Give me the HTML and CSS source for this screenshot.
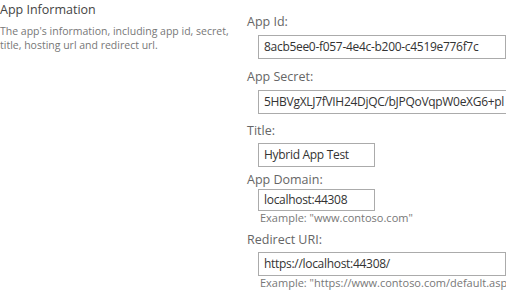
FILE: index.html
```html
<!DOCTYPE html>
<html>
<head>
<meta charset="utf-8">
<link rel="stylesheet" href="styles.css">
</head>
<body>
<div class="section">
  <div class="info">
    <h3 class="info-title">App Information</h3>
    <p class="info-desc">The app's information, including app id, secret, title, hosting url and redirect url.</p>
  </div>
  <div class="fields">
    <div class="field field-first">
      <div class="label">App Id:</div>
      <div class="box box-wide">8acb5ee0-f057-4e4c-b200-c4519e776f7c</div>
    </div>
    <div class="field field-secret">
      <div class="label">App Secret:</div>
      <div class="box box-over">5HBVgXLJ7fVIH24DjQC/bJPQoVqpW0eXG6+pl</div>
    </div>
    <div class="field field-title">
      <div class="label label-close">Title:</div>
      <div class="box box-short">Hybrid App Test</div>
    </div>
    <div class="field field-domain">
      <div class="label label-none">App Domain:</div>
      <div class="box box-short box-small">localhost:44308</div>
      <div class="example">Example: "www.contoso.com"</div>
    </div>
    <div class="field field-redirect">
      <div class="label label-close">Redirect URI:</div>
      <div class="box box-wide">https://localhost:44308/</div>
      <div class="example">Example: "https://www.contoso.com/default.aspx"</div>
    </div>
  </div>
</div>
</body>
</html>
```
FILE: styles.css
```css
html, body {
  margin: 0;
  padding: 0;
  background: #ffffff;
  overflow: hidden;
}
body {
  font-family: "Open Sans", "Noto Sans", sans-serif;
  color: #444444;
  width: 506px;
  height: 290px;
}
.section {
  display: flex;
  align-items: flex-start;
}
.info {
  width: 247px;
  flex: none;
  padding-top: 2px;
}
.info-title {
  margin: 0;
  font-size: 12.5px;
  font-weight: normal;
  line-height: 16px;
  color: #444444;
}
.info-desc {
  margin: 6px 0 0 0;
  font-size: 10.5px;
  line-height: 14px;
  color: #777777;
  width: 236px;
}
.fields {
  display: flex;
  flex-direction: column;
  padding-top: 13px;
  flex: none;
  width: 400px;
}
.field {
  display: flex;
  flex-direction: column;
  margin-top: 8px;
}
.field-first { margin-top: 0; }
.field-secret { margin-top: 9px; }
.field-title { margin-top: 8px; }
.field-domain { margin-top: 4px; }
.field-redirect { margin-top: 6px; }
.label {
  font-size: 12.5px;
  line-height: 18px;
  color: #666666;
  margin-bottom: 4px;
}
.label-close { margin-bottom: 3px; }
.label-none { margin-bottom: 0; }
.box {
  box-sizing: border-box;
  height: 24px;
  margin-left: 11px;
  border: 1px solid #ababab;
  padding: 0 5px;
  font-size: 12px;
  letter-spacing: -0.3px;
  line-height: 22px;
  color: #333333;
  white-space: nowrap;
  overflow: hidden;
}
.box-small {
  height: 22px;
  line-height: 20px;
}
.box-wide { width: 248px; }
.box-short { width: 117px; }
.box-over { width: 380px; }
.example {
  margin-left: 11px;
  padding-left: 2px;
  font-size: 11px;
  line-height: 14px;
  color: #777777;
  white-space: nowrap;
}
```
